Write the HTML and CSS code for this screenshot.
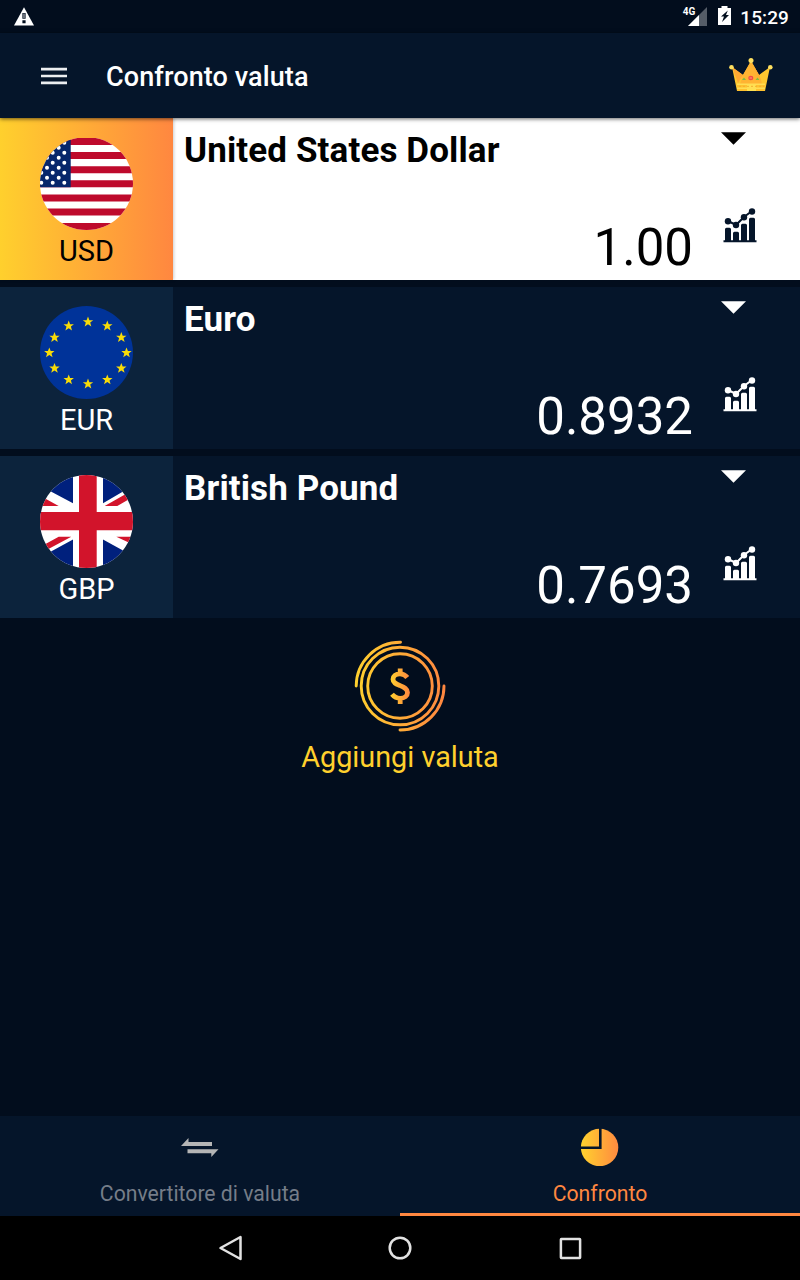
FILE: index.html
```html
<!DOCTYPE html>
<html lang="it">
<head>
<meta charset="utf-8">
<title>Confronto valuta</title>
<link rel="stylesheet" href="styles.css">
</head>
<body>
<svg class="defs" width="0" height="0">
  <defs>
    <linearGradient id="gold"><stop offset="0" stop-color="#ffd22e"/><stop offset="1" stop-color="#ff8a40"/></linearGradient>
    <linearGradient id="goldRing" gradientUnits="userSpaceOnUse" x1="0" y1="0" x2="92" y2="0"><stop offset="0" stop-color="#ffd22e"/><stop offset="1" stop-color="#ff8540"/></linearGradient>
    <linearGradient id="goldSign" gradientUnits="userSpaceOnUse" x1="36" y1="0" x2="56" y2="0"><stop offset="0" stop-color="#ffd22e"/><stop offset="1" stop-color="#ff8540"/></linearGradient>
    <clipPath id="round"><circle cx="46.5" cy="46.5" r="46.5"/></clipPath>
    <path id="star" d="M0-5.2 1.4-1.6 5.2-1.6 2.2.8 3.300 4.600 0 2.400-3.300 4.600-2.200.8-5.2-1.6-1.400-1.6Z"/>
    <symbol id="chart" viewBox="0 0 34 35">
      <path d="M.5 32.2h33v2h-33z"/>
      <path d="M2 33V21.200q0-1.500 1.500-1.500h3q1.500 0 1.500 1.500V33zM10 33v-7.700q0-1.500 1.500-1.500h3q1.500 0 1.500 1.500V33zM18 33V17.300q0-1.500 1.500-1.500h3q1.500 0 1.500 1.500V33zM26 33V11.200q0-1.500 1.500-1.500h3q1.500 0 1.500 1.500V33z"/>
      <path d="M5 13l8 4 8-8 8-6" fill="none" stroke="currentColor" stroke-width="2"/>
      <circle cx="5" cy="13.300" r="3.200"/><circle cx="13" cy="17" r="3.200"/><circle cx="21" cy="9.300" r="3.200"/><circle cx="29" cy="3.500" r="3.200"/>
    </symbol>
  </defs>
</svg>

<header class="status">
  <svg width="20" height="19" viewBox="0 0 20 19"><path d="M10 .3 20 18.500H0z" fill="#fff"/><path d="M8.400 6h3.200v5.800H8.400zM8.400 13.200h3.200v3H8.400z" fill="#020e1e"/><path d="M9.200 6.500h1.600v4.800H9.200z" fill="#858b93"/></svg>
  <div class="status-right">
    <span class="net">4G</span>
    <svg class="signal" width="19" height="19" viewBox="0 0 19 19"><path d="M19 0v19H0z" fill="#555d68"/><path d="M11 8v11H0z" fill="#fff"/></svg>
    <svg class="battery" width="13" height="19" viewBox="0 0 13 19"><path d="M3.500 0h6v2H13v17H0V2h3.500z" fill="#fff"/><path d="M9.800 4.500 3 10.500h3l-2 5.500 7-7H8z" fill="#020e1e"/></svg>
    <span class="clock">15:29</span>
  </div>
</header>

<nav class="appbar">
  <svg width="26" height="18" viewBox="0 0 26 18"><path d="M0 2.200h26M0 9h26M0 15.800h26" stroke="#eceef0" stroke-width="2.700"/></svg>
  <h1>Confronto valuta</h1>
  <svg class="crown" width="44" height="34" viewBox="0 0 44 34">
    <path d="M8 33 3 9l11 8L22 3l8 14 11-8-5 24z" fill="#ffc72f"/>
    <path d="M22 3 14 17l-3 9h22l-3-9z" fill="#ffb332"/>
    <path d="M14 17 3 9l6 16zM22 3l8 14 3 8z" fill="#ffa733"/>
    <path d="M8 26h28v7H8z" fill="#ffc12e"/><path d="M18 26h9v7h-9z" fill="#ffe150"/>
    <path d="M8 26.200h28M8 30.200h28" stroke="#ffdd54" stroke-width="1.400"/>
    <path d="M10 28.300h25" stroke="#f3ad32" stroke-width="1" stroke-dasharray="2 2"/>
    <g fill="#ffe060"><circle cx="22" cy="2.600" r="2.500"/><circle cx="2.500" cy="9.300" r="2.300"/><circle cx="41.300" cy="9.300" r="2.300"/></g>
    <ellipse cx="21.800" cy="20" rx="2.600" ry="2.200" fill="#f34d45"/><path d="M20.500 20h2.500" stroke="#ff9b76"/>
    <path d="M15 19.500l2 2.500h-4zM28.500 19.500l2 2.500h-4z" fill="#83bd3e"/>
  </svg>
</nav>

<main class="content">
  <section class="row row-active">
    <div class="code">
      <svg class="flag" viewBox="0 0 93 93"><g clip-path="url(#round)">
        <path d="M0 1h93v92H0z" fill="#fff"/>
        <path d="M0 4.500h93M0 18.600h93M0 32.700h93M0 46.800h93M0 60.900h93M0 75h93M0 89.500h93" stroke="#be0a2c" stroke-width="7"/>
        <path d="M0 1h30.700v49.300H0z" fill="#07266b"/>
        <g stroke="#fff" stroke-width="4" stroke-linecap="round" stroke-dasharray="0 10"><path d="M24.300 5.700v41M12.700 5.700v41M1.300 5.700v41M18.700 10.700v31M7 10.700v31"/></g>
      </g></svg>
      <span>USD</span>
    </div>
    <div class="info"><h2>United States Dollar</h2><p>1.00</p></div>
    <div class="tools"><svg class="caret" viewBox="0 0 26 13"><path d="M0 0h26L13 13z"/></svg><svg class="chart"><use href="#chart"/></svg></div>
  </section>

  <section class="row">
    <div class="code">
      <svg class="flag" viewBox="0 0 93 93"><circle cx="46.500" cy="46.500" r="46.500" fill="#039"/>
        <g fill="#f8dc08"><use href="#star" x="48" y="15.800"/><use href="#star" x="67.300" y="19.800"/><use href="#star" x="81.300" y="31.300"/><use href="#star" x="86.500" y="46.700"/><use href="#star" x="81.300" y="62.200"/><use href="#star" x="67.300" y="73.700"/><use href="#star" x="48" y="77.800"/><use href="#star" x="28.700" y="73.700"/><use href="#star" x="14.500" y="62.200"/><use href="#star" x="9.300" y="46.700"/><use href="#star" x="14.500" y="31.300"/><use href="#star" x="28.700" y="19.800"/></g>
      </svg>
      <span>EUR</span>
    </div>
    <div class="info"><h2>Euro</h2><p>0.8932</p></div>
    <div class="tools"><svg class="caret" viewBox="0 0 26 13"><path d="M0 0h26L13 13z"/></svg><svg class="chart"><use href="#chart"/></svg></div>
  </section>

  <section class="row">
    <div class="code">
      <svg class="flag" viewBox="0 0 93 93"><g clip-path="url(#round)">
        <path d="M0 0h93v93H0z" fill="#fff"/>
        <path d="M0 10.700 33 28.300V0H0zM63 28.300 93 10.700V0H63zM33 64.500 0 82.500V93h33zM63 64.500 93 81V93H63z" fill="#00207d"/>
        <path d="M0 20.700 18.700 31H0zM64.700 31h12.600L93 22v-7zM31.300 61.700H18.700L0 72v6.500zM76.300 61.700H93v7.800z" fill="#d2142b"/>
        <path d="M39 0h17.700v37H93v18.300H56.700V93H39V55.300H0V37h39z" fill="#d2142b"/>
      </g></svg>
      <span>GBP</span>
    </div>
    <div class="info"><h2>British Pound</h2><p>0.7693</p></div>
    <div class="tools"><svg class="caret" viewBox="0 0 26 13"><path d="M0 0h26L13 13z"/></svg><svg class="chart"><use href="#chart"/></svg></div>
  </section>

  <div class="add">
    <svg width="92" height="92" viewBox="0 0 92 92" fill="none" stroke="url(#goldRing)" stroke-width="2.900" stroke-linecap="round">
      <circle cx="46" cy="46" r="32.300"/><circle cx="46" cy="46" r="38.800"/>
      <path d="M46.500 2.200A44 44 0 0 0 2.200 46M90 46A44 44 0 0 1 46 90"/>
      <path d="M53.300 37.500C51.500 35 49.200 33.800 46 33.800c-4.200 0-7 2.200-7 5.400 0 3.800 3.600 4.900 7.200 6.400 4.100 1.700 7.300 3.100 7.300 6.900 0 3.500-3 5.800-7.200 5.800-3.500 0-6.300-1.500-8.300-4M46.200 28.500v5M46.200 59v5" stroke="url(#goldSign)" stroke-width="4.800" stroke-linecap="butt"/>
    </svg>
    <span>Aggiungi valuta</span>
  </div>
</main>

<nav class="tabs">
  <div class="tab">
    <svg width="38" height="38" viewBox="0 0 38 38" fill="#b5b5b5"><path d="M0 18 7.500 10v4H31v4zM6.500 21.200h31L30.300 29v-3.800H6.500z"/></svg>
    <span>Convertitore di valuta</span>
  </div>
  <div class="tab tab-active">
    <svg width="38" height="38" viewBox="0 0 38 38"><circle cx="18.600" cy="19.500" r="18.700" fill="url(#gold)"/><path d="M19.300 0v19.800H0" fill="none" stroke="#05152a" stroke-width="2.600"/></svg>
    <span>Confronto</span>
  </div>
</nav>

<footer class="sysnav">
  <svg viewBox="0 0 26 26"><path d="M3.500 13 23.500 2v22z"/></svg>
  <svg viewBox="0 0 26 26"><circle cx="13" cy="13" r="10.300"/></svg>
  <svg viewBox="0 0 26 26"><rect x="3.900" y="3.900" width="19.200" height="19" rx=".5"/></svg>
</footer>
</body>
</html>
```
FILE: styles.css
```css
* { box-sizing: border-box; margin: 0; padding: 0; }
body { width: 800px; height: 1280px; display: flex; flex-direction: column; overflow: hidden; background: #020d1d; color: #fff; font-family: Roboto, sans-serif; }
svg { display: block; flex: none; }
.defs { position: absolute; }

.status { height: 33px; display: flex; justify-content: space-between; align-items: flex-start; padding: 7px 11px 0 14px; }
.status-right { display: flex; align-items: flex-start; }
.net { font-size: 10px; line-height: 10px; font-weight: 700; margin-right: -7px; }
.battery { margin: -1px 9px 0 11px; }
.clock { font-size: 19px; font-weight: 500; line-height: 22px; letter-spacing: .1px; }

.appbar { height: 85px; flex: none; display: flex; align-items: center; padding: 0 27px 2px 41px; background: #05152a; box-shadow: 0 1px 4px rgba(0, 0, 0, .6); z-index: 1; }
.appbar h1 { font-size: 27px; font-weight: 500; line-height: 32px; letter-spacing: .1px; margin: 4px auto 0 39px; }
.appbar svg:first-child { margin-top: 2px; }

.content { flex: 1; display: flex; flex-direction: column; gap: 7px; }
.row { height: 162px; flex: none; display: flex; background: #05152a; }
.row-active { background: #fff; color: #000; }
.code { width: 173px; display: flex; flex-direction: column; align-items: center; padding-top: 19px; background: #0c233c; }
.row-active .code { background: linear-gradient(90deg, #ffd02d, #ff8740); box-shadow: 1px 0 3px rgba(0, 0, 0, .2); }
.flag { width: 93px; height: 93px; }
.code span { font-size: 29px; line-height: 34px; margin-top: 4px; }
.info { flex: 1; display: flex; flex-direction: column; justify-content: space-between; padding: 13px 0 2px 11px; }
.info h2 { font-size: 35px; line-height: 40px; font-weight: 700; letter-spacing: .12px; }
.info p { font-size: 51px; line-height: 60px; text-align: right; }
.tools { width: 107px; display: flex; flex-direction: column; padding: 14px 0 0 28px; fill: currentColor; }
.caret { width: 25px; height: 13px; }
.chart { width: 34px; height: 35px; margin: 63px 0 0 2px; }
.row-active .chart { color: #05152a; }

.add { display: flex; flex-direction: column; align-items: center; padding-top: 15px; color: #ffd02d; }
.add span { font-size: 28.800px; line-height: 34px; margin-top: 8px; }

.tabs { height: 100px; flex: none; display: flex; background: #05152a; }
.tab { flex: 1; display: flex; flex-direction: column; align-items: center; padding-top: 12px; color: #757d88; border-bottom: 3px solid transparent; }
.tab span { font-size: 21.200px; line-height: 26px; margin-top: 15px; }
.tab-active { color: #ff8740; border-color: #ff8740; }

.sysnav { height: 64px; flex: none; display: flex; justify-content: center; align-items: center; gap: 144px; background: #000; }
.sysnav svg { width: 26px; height: 26px; fill: none; stroke: #e2e2e2; stroke-width: 2.500; stroke-linejoin: round; }
```
